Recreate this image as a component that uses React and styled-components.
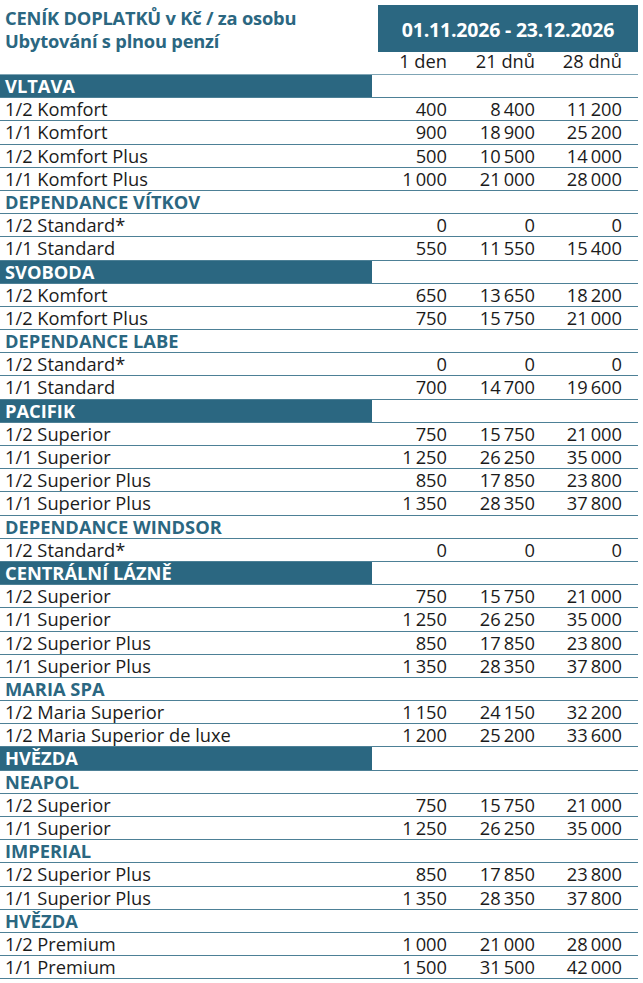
import React from 'react';
import styled, { createGlobalStyle } from 'styled-components';

const Global = createGlobalStyle`
    body {
        margin: 0;
        background: #fff;
        font-family: "Open Sans", Lato, sans-serif;
        color: #1b1b1b;
    }
`;

const teal = '#2b6781';

const Page = styled.div`
    width: 638px;
    padding-top: 5px;
`;

const Header = styled.div`
    display: grid;
    grid-template-columns: 378px 260px;
    height: 45px;
`;

const Title = styled.div`
    padding: 1px 0 0 5px;
    color: ${teal};
    font-weight: 700;
    font-size: 18.3px;
    line-height: 23px;
    letter-spacing: -0.2px;
`;

const DateBox = styled.div`
    background: ${teal};
    color: #fff;
    font-weight: 700;
    font-size: 19.5px;
    letter-spacing: -0.2px;
    display: flex;
    align-items: center;
    justify-content: center;
    padding-top: 2px;
`;

const Row = styled.div`
    display: grid;
    grid-template-columns: 372px 75px 88px 87px 16px;
    height: ${p => p.h || 23.2}px;
    box-sizing: border-box;
    border-bottom: 1.5px solid ${p => p.light ? '#7fa5b5' : '#4d8096'};
    font-size: 18.3px;
    line-height: 22px;
`;

const Label = styled.div`
    padding-left: 5px;
    white-space: nowrap;
    ${p => p.band && `
        background: ${teal};
        color: #fff;
        font-weight: 700;
    `}
    ${p => p.heading && `
        color: ${teal};
        font-weight: 700;
    `}
`;

const Num = styled.div`
    text-align: right;
    white-space: nowrap;
`;

const data = [
    ['band', 'VLTAVA'],
    ['1/2 Komfort', '400', '8 400', '11 200'],
    ['1/1 Komfort', '900', '18 900', '25 200'],
    ['1/2 Komfort Plus', '500', '10 500', '14 000'],
    ['1/1 Komfort Plus', '1 000', '21 000', '28 000'],
    ['head', 'DEPENDANCE VÍTKOV'],
    ['1/2 Standard*', '0', '0', '0'],
    ['1/1 Standard', '550', '11 550', '15 400'],
    ['band', 'SVOBODA'],
    ['1/2 Komfort', '650', '13 650', '18 200'],
    ['1/2 Komfort Plus', '750', '15 750', '21 000'],
    ['head', 'DEPENDANCE LABE'],
    ['1/2 Standard*', '0', '0', '0'],
    ['1/1 Standard', '700', '14 700', '19 600'],
    ['band', 'PACIFIK'],
    ['1/2 Superior', '750', '15 750', '21 000'],
    ['1/1 Superior', '1 250', '26 250', '35 000'],
    ['1/2 Superior Plus', '850', '17 850', '23 800'],
    ['1/1 Superior Plus', '1 350', '28 350', '37 800'],
    ['head', 'DEPENDANCE WINDSOR'],
    ['1/2 Standard*', '0', '0', '0'],
    ['band', 'CENTRÁLNÍ LÁZNĚ'],
    ['1/2 Superior', '750', '15 750', '21 000'],
    ['1/1 Superior', '1 250', '26 250', '35 000'],
    ['1/2 Superior Plus', '850', '17 850', '23 800'],
    ['1/1 Superior Plus', '1 350', '28 350', '37 800'],
    ['head', 'MARIA SPA'],
    ['1/2 Maria Superior', '1 150', '24 150', '32 200'],
    ['1/2 Maria Superior de luxe', '1 200', '25 200', '33 600'],
    ['band', 'HVĚZDA'],
    ['head', 'NEAPOL'],
    ['1/2 Superior', '750', '15 750', '21 000'],
    ['1/1 Superior', '1 250', '26 250', '35 000'],
    ['head', 'IMPERIAL'],
    ['1/2 Superior Plus', '850', '17 850', '23 800'],
    ['1/1 Superior Plus', '1 350', '28 350', '37 800'],
    ['head', 'HVĚZDA'],
    ['1/2 Premium', '1 000', '21 000', '28 000'],
    ['1/1 Premium', '1 500', '31 500', '42 000'],
];

const fmt = s => s.replace(' ', '\u2009');

export default function App() {
    return <Page>
        <Global />
        <Header>
            <Title>
                CENÍK DOPLATKŮ v Kč / za osobu<br />
                Ubytování s plnou penzí
            </Title>
            <DateBox>01.11.2026 - 23.12.2026</DateBox>
        </Header>
        <Row h={25} light>
            <Label />
            <Num>1 den</Num>
            <Num>21 dnů</Num>
            <Num>28 dnů</Num>
        </Row>
        {data.map((r, i) => {
            if (r[0] === 'band' || r[0] === 'head') {
                return <Row key={i}>
                    <Label band={r[0] === 'band'} heading={r[0] === 'head'}>{r[1]}</Label>
                </Row>;
            }
            return <Row key={i}>
                <Label>{r[0]}</Label>
                <Num>{fmt(r[1])}</Num>
                <Num>{fmt(r[2])}</Num>
                <Num>{fmt(r[3])}</Num>
            </Row>;
        })}
    </Page>;
}
